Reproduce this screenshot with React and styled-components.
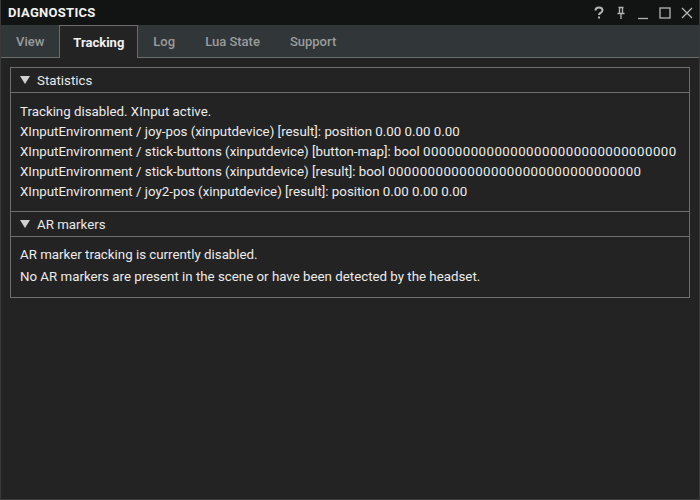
import styled, { createGlobalStyle } from "styled-components";

const Global = createGlobalStyle`
  html, body { margin: 0; padding: 0; background: #232323; }
  body { width: 700px; height: 500px; overflow: hidden; }
  * { box-sizing: border-box; }
`;

const Window = styled.div`
  width: 700px;
  height: 500px;
  display: flex;
  flex-direction: column;
  background: #232323;
  border: 1px solid #3a3a3a;
  border-top: none;
  font-family: Roboto, "Noto Sans", sans-serif;
  color: #e8e8e8;
`;

const TitleBar = styled.div`
  height: 25px;
  background: #121413;
  display: flex;
  align-items: center;
  padding: 0 0 0 7px;
`;

const Title = styled.div`
  font-weight: 700;
  font-size: 13px;
  letter-spacing: 0.3px;
  color: #f2f2f2;
  flex: 1;
`;

const TitleButtons = styled.div`
  display: flex;
  align-items: center;
  gap: 8px;
  padding-right: 5px;
`;

const IconBtn = styled.span`
  width: 14px;
  height: 14px;
  display: inline-flex;
  align-items: center;
  justify-content: center;
  color: #b4b4b4;
`;

const TabBar = styled.div`
  height: 33px;
  background: #313638;
  display: flex;
  align-items: flex-end;
  border-bottom: 1px solid #6c6c6c;
`;

const Tab = styled.div`
  height: ${(p) => (p.$active ? "33px" : "32px")};
  padding: 0 ${(p) => (p.$active ? "13px" : "14px")};
  display: flex;
  align-items: center;
  font-size: 13px;
  font-weight: ${(p) => (p.$active ? 700 : 500)};
  color: ${(p) => (p.$active ? "#f0f0f0" : "#9a9c9d")};
  background: ${(p) => (p.$active ? "#232323" : "transparent")};
  border: 1px solid ${(p) => (p.$active ? "#6c6c6c" : "transparent")};
  border-bottom: none;
  margin-bottom: ${(p) => (p.$active ? "-1px" : "0")};
`;

const Body = styled.div`
  flex: 1;
  padding: 9px 9px;
`;

const Group = styled.div`
  border: 1px solid #6e6e6e;
`;

const SectionHeader = styled.div`
  height: ${(p) => (p.$first ? "25px" : "26px")};
  display: flex;
  align-items: center;
  padding-left: 9px;
  gap: 7px;
  font-size: 13.3px;
  color: #e8e8e8;
  border-top: ${(p) => (p.$first ? "none" : "1px solid #6e6e6e")};
  border-bottom: 1px solid #6e6e6e;
`;

const SectionBody = styled.div`
  padding: ${(p) => (p.$tight ? "7px 9px 9px" : "9px 9px 9px")};
  font-size: 13.3px;
  color: #ececec;
`;

const Line = styled.div`
  white-space: nowrap;
  height: ${(p) => (p.$tall ? "22px" : "20px")};
  line-height: ${(p) => (p.$tall ? "22px" : "20px")};
`;

const Zeros = styled.span`
  letter-spacing: 0.45px;
`;

const Tri = () => (
  <svg width="10" height="8" viewBox="0 0 10 8">
    <path d="M0 0 L10 0 L5 8 Z" fill="#d0d0d0" />
  </svg>
);

const zeros = "0".repeat(32);

export default function App() {
  return (
    <>
      <Global />
      <Window>
        <TitleBar>
          <Title>DIAGNOSTICS</Title>
          <TitleButtons>
            <IconBtn>
              <svg width="12" height="14" viewBox="0 0 12 14">
                <path d="M2.5 4.5 Q2.5 1.5 6 1.5 Q9.5 1.5 9.5 4.3 Q9.5 6 7.5 7 Q6 7.8 6 9" fill="none" stroke="currentColor" strokeWidth="2" />
                <rect x="5" y="10.5" width="2" height="2" fill="currentColor" />
              </svg>
            </IconBtn>
            <IconBtn>
              <svg width="12" height="14" viewBox="0 0 12 14">
                <path d="M3.5 1.5 H8.5 M4.5 1.5 V7 M7.5 1.5 V7 M2.5 7.5 H9.5 M6 7.5 V13" fill="none" stroke="currentColor" strokeWidth="1.3" />
              </svg>
            </IconBtn>
            <IconBtn>
              <svg width="12" height="14" viewBox="0 0 12 14">
                <path d="M1 12.5 H11" stroke="currentColor" strokeWidth="1.3" />
              </svg>
            </IconBtn>
            <IconBtn>
              <svg width="12" height="14" viewBox="0 0 12 14">
                <rect x="1" y="2" width="10" height="10" fill="none" stroke="currentColor" strokeWidth="1.3" />
              </svg>
            </IconBtn>
            <IconBtn>
              <svg width="12" height="14" viewBox="0 0 12 14">
                <path d="M1 2 L11 12 M11 2 L1 12" stroke="currentColor" strokeWidth="1.3" />
              </svg>
            </IconBtn>
          </TitleButtons>
        </TitleBar>
        <TabBar>
          <Tab>View</Tab>
          <Tab $active>Tracking</Tab>
          <Tab>Log</Tab>
          <Tab>Lua State</Tab>
          <Tab>Support</Tab>
        </TabBar>
        <Body>
          <Group>
            <SectionHeader $first>
              <Tri />
              Statistics
            </SectionHeader>
            <SectionBody>
              <Line>Tracking disabled. XInput active.</Line>
              <Line>XInputEnvironment / joy-pos (xinputdevice) [result]: position 0.00 0.00 0.00</Line>
              <Line>XInputEnvironment / stick-buttons (xinputdevice) [button-map]: bool <Zeros>{zeros}</Zeros></Line>
              <Line>XInputEnvironment / stick-buttons (xinputdevice) [result]: bool <Zeros>{zeros}</Zeros></Line>
              <Line>XInputEnvironment / joy2-pos (xinputdevice) [result]: position 0.00 0.00 0.00</Line>
            </SectionBody>
            <SectionHeader>
              <Tri />
              AR markers
            </SectionHeader>
            <SectionBody $tight>
              <Line $tall>AR marker tracking is currently disabled.</Line>
              <Line $tall>No AR markers are present in the scene or have been detected by the headset.</Line>
            </SectionBody>
          </Group>
        </Body>
      </Window>
    </>
  );
}
